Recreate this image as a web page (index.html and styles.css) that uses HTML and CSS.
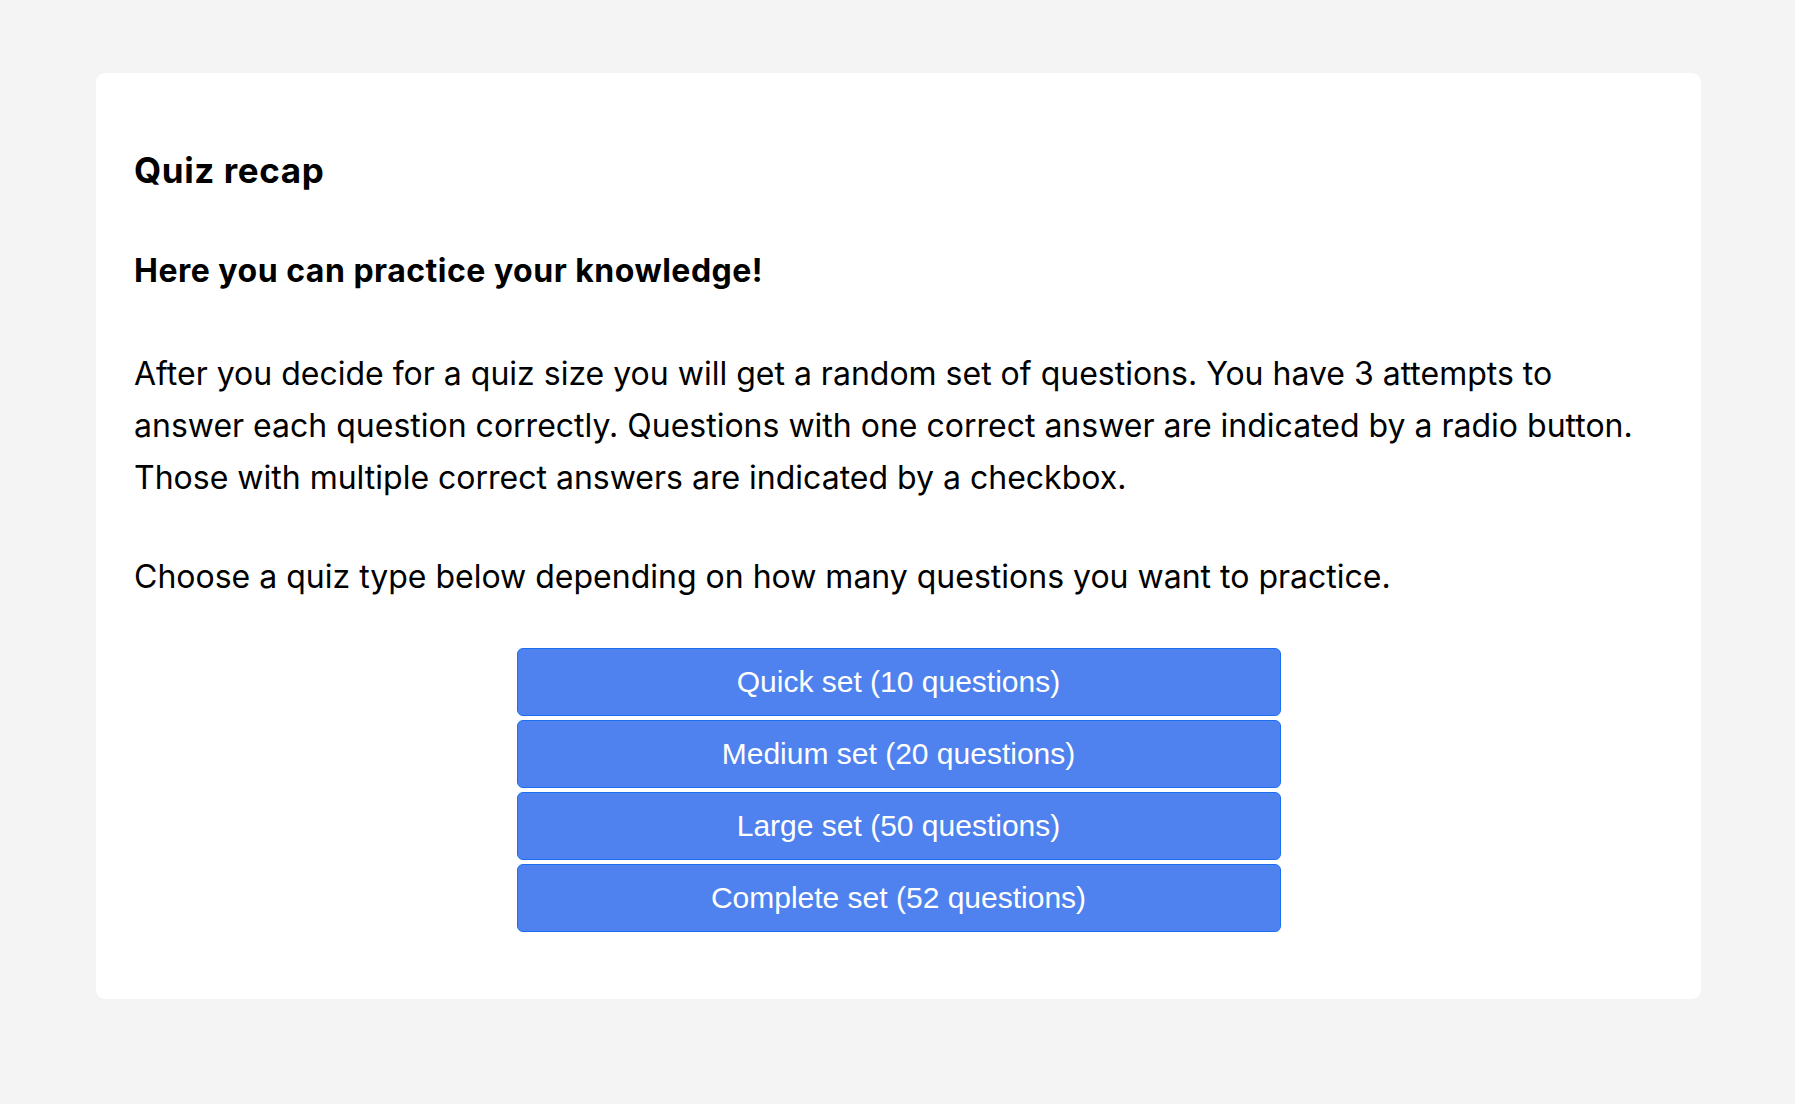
FILE: index.html
```html
<!DOCTYPE html>
<html lang="en">
<head>
<meta charset="utf-8">
<title>Quiz recap</title>
<link rel="stylesheet" href="styles.css">
</head>
<body>
<div class="page">
  <main class="card">
    <h1 class="title">Quiz recap</h1>
    <h2 class="subtitle">Here you can practice your knowledge!</h2>
    <p class="text">After you decide for a quiz size you will get a random set of questions. You have 3 attempts to answer each question correctly. Questions with one correct answer are indicated by a radio button. Those with multiple correct answers are indicated by a checkbox.</p>
    <p class="text text-last">Choose a quiz type below depending on how many questions you want to practice.</p>
    <div class="choices">
      <button class="choice" type="button">Quick set (10 questions)</button>
      <button class="choice" type="button">Medium set (20 questions)</button>
      <button class="choice" type="button">Large set (50 questions)</button>
      <button class="choice" type="button">Complete set (52 questions)</button>
    </div>
  </main>
</div>
</body>
</html>
```
FILE: styles.css
```css
html, body {
  margin: 0;
  padding: 0;
}
body {
  background: #f4f4f4;
  font-family: Inter, "Noto Sans", sans-serif;
  color: #000;
}
.page {
  padding: 73px 94px 105px 96px;
}
.card {
  background: #fff;
  border-radius: 9px;
  padding: 76px 38px 67px 38px;
}
.title {
  margin: 0;
  font-size: 35px;
  line-height: 42px;
  font-weight: 700;
  letter-spacing: 0.6px;
}
.subtitle {
  margin: 61px 0 0;
  font-size: 32px;
  line-height: 38px;
  font-weight: 700;
  letter-spacing: 0.5px;
}
.text {
  margin: 58px 0 0;
  font-size: 32px;
  line-height: 52px;
  font-weight: 400;
  letter-spacing: 0;
}
.text-last {
  margin-top: 47px;
}
.choices {
  margin: 45px auto 0;
  width: 764px;
  display: flex;
  flex-direction: column;
  gap: 4px;
}
.choice {
  height: 68px;
  margin: 0;
  padding: 0;
  border: 1px solid #1a6ff0;
  border-radius: 6px;
  background: #4f82ee;
  color: #fff;
  font-family: "Liberation Sans", Arial, sans-serif;
  font-size: 30px;
  font-weight: 400;
  text-align: center;
}
```
